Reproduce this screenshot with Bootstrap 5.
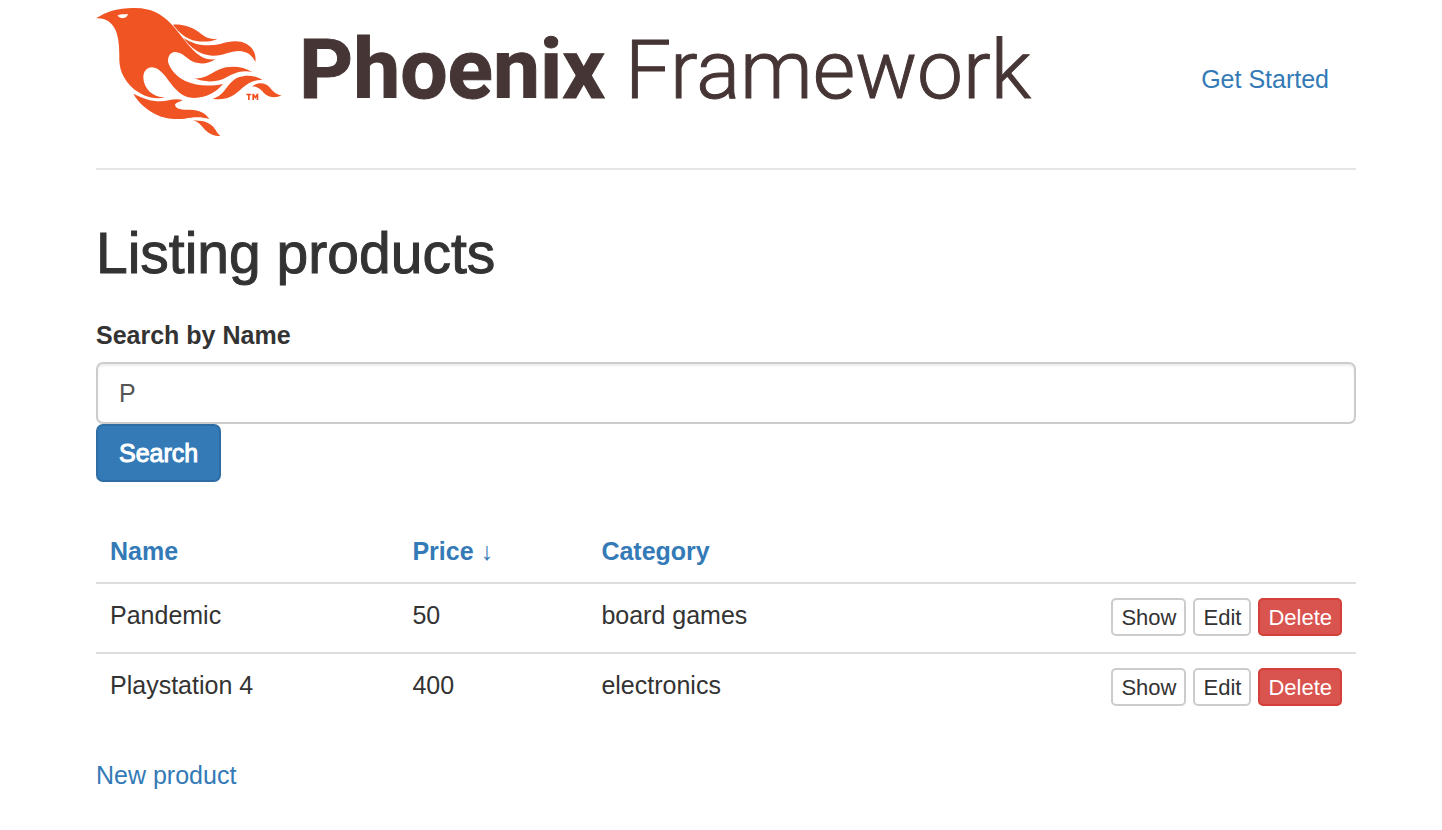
<!DOCTYPE html>
<html lang="en">
<head>
<meta charset="utf-8">
<meta name="viewport" content="width=device-width, initial-scale=1">
<title>Listing products</title>
<link href="https://cdn.jsdelivr.net/npm/bootstrap@5.3.0/dist/css/bootstrap.min.css" rel="stylesheet">
<style>
  body { font-family: "Liberation Sans", Arial, sans-serif; font-size: 25px; line-height: 34px; color: #333; background: #fff; }
  a { color: #337ab7; text-decoration: none; }
  a:hover { text-decoration: underline; }
  .page { padding: 8px 86px 24px 96px; }
  .site-header { border-bottom: 2px solid #e5e5e5; padding-bottom: 32px; }
  .brand, .brand:hover { color: #463535; text-decoration: none; font-family: Roboto, sans-serif; line-height: 120px; }
  .brand-first, .brand-second { padding-bottom: 4px; -webkit-text-stroke: 1px #463535; }
  .brand-first { font-size: 84px; font-weight: 700; margin-left: 17px; }
  .brand-second { font-size: 82px; font-weight: 300; margin-left: 20px; }
  .site-nav { padding: 14px 27px 0 0; }
  h2 { font-size: 57px; line-height: 64px; font-weight: 400; -webkit-text-stroke: 1px #333; margin: 51px 0 33px; }
  .form-label { font-weight: 700; margin-bottom: 10px; }
  .form-control, .form-control:focus { font-size: 25px; line-height: 34px; color: #555; padding: 12px 21px; border: 2px solid #ccc; border-radius: 7px; box-shadow: inset 0 2px 2px rgba(0,0,0,.075); }
  .btn-search { font-size: 25px; line-height: 34px; padding: 10px 21px; border: 2px solid #2e6da4; border-radius: 7px; color: #fff; background: #337ab7; -webkit-text-stroke: 1px #fff; }
  .products { color: #333; margin: 38px 0 36px; --bs-table-color: #333; }
  .products > :not(caption) > * > * { padding: 14px; border-bottom: 0; }
  .products > tbody > tr > * { border-top: 2px solid #ddd; }
  .products .col-name { width: 24%; }
  .products .col-price { width: 15%; }
  .actions { height: 40px; gap: 7px; }
  .btn-row { font-size: 22px; line-height: 32px; padding: 2px 8px 0; border: 2px solid #ccc; border-radius: 5px; color: #333; background: #fff; }
  .btn-row.btn-delete { color: #fff; background: #d9534f; border-color: #d43f3a; }
</style>
</head>
<body>
<div class="container-fluid page">
  <header class="site-header d-flex align-items-center justify-content-between">
    <a class="brand d-flex align-items-center" href="#">
      <svg width="186" height="128" viewBox="18 24 558 384" fill="#f05423" aria-hidden="true">
        <path fill-rule="evenodd" d="M18 55C50 34 85 24 128 24C178 23 211 38 243 71C275 105 297 145 332 169C346 178 361 179 376 178C359 190 335 194 313 187C290 178 280 157 255 156C240 157 234 169 234 185C240 207 259 230 286 243C322 260 362 259 399 252C380 276 351 292 312 294C276 293 255 267 236 242C222 223 207 203 186 202C170 203 160 214 160 233C162 265 185 291 225 292C190 302 150 284 128 264C103 239 90 216 88 182C88 153 88 125 80 99C71 71 50 53 18 55ZM83 46C93 41 103 44 114 42C112 51 104 56 94 54C88 53 85 50 83 46Z"/>
        <path d="M249 74C274 72 301 79 323 94C342 109 357 121 383 116C366 126 340 126 319 123C288 117 268 98 249 74Z"/>
        <path d="M280 113C316 137 353 140 391 132C420 124 445 119 470 132C491 144 499 164 496 186C488 166 470 154 447 153C420 153 400 168 367 167C328 164 301 142 280 113Z"/>
        <path d="M313 235C353 238 370 210 408 202C436 197 464 202 486 216C451 209 430 222 401 236C373 248 338 246 313 235Z"/>
        <path d="M368 296C407 287 408 248 446 232C469 223 496 226 517 240C482 238 466 257 443 276C421 295 397 301 368 296Z"/>
        <path d="M486 259C503 247 524 246 538 261C549 273 557 284 575 286C559 294 541 294 525 282C513 269 505 259 486 259Z"/>
        <path d="M130 281C156 294 182 304 211 304C236 304 250 293 278 300C269 306 258 307 255 314C256 328 278 329 300 329C328 331 346 338 358 357C331 349 308 352 284 356C245 359 215 354 188 338C161 322 142 303 130 281Z"/>
        <path d="M308 361C334 362 355 364 371 382C379 392 383 403 391 408C376 409 361 404 349 393C336 381 329 366 308 361Z"/>
        <path d="M469 281h15v5h-5v14h-5v-14h-5ZM487 281h5l4 7l4-7h5v19h-5v-9l-4 6l-4-6v9h-5Z"/>
      </svg>
      <span class="brand-first">Phoenix</span><span class="brand-second">Framework</span>
    </a>
    <nav class="site-nav"><a href="#">Get Started</a></nav>
  </header>

  <main>
    <h2>Listing products</h2>
    <form onsubmit="return false">
      <label class="form-label d-block" for="search-name">Search by Name</label>
      <input class="form-control" type="text" id="search-name" value="P">
      <button class="btn btn-search d-block" type="submit">Search</button>
    </form>

    <table class="table products">
      <thead>
        <tr>
          <th class="col-name" scope="col"><a href="#">Name</a></th>
          <th class="col-price" scope="col"><a href="#">Price ↓</a></th>
          <th scope="col"><a href="#">Category</a></th>
          <td></td>
        </tr>
      </thead>
      <tbody>
        <tr>
          <td>Pandemic</td><td>50</td><td>board games</td>
          <td><div class="actions d-flex justify-content-end align-items-start">
            <button class="btn btn-row" type="button">Show</button>
            <button class="btn btn-row" type="button">Edit</button>
            <button class="btn btn-row btn-delete" type="button">Delete</button>
          </div></td>
        </tr>
        <tr>
          <td>Playstation 4</td><td>400</td><td>electronics</td>
          <td><div class="actions d-flex justify-content-end align-items-start">
            <button class="btn btn-row" type="button">Show</button>
            <button class="btn btn-row" type="button">Edit</button>
            <button class="btn btn-row btn-delete" type="button">Delete</button>
          </div></td>
        </tr>
      </tbody>
    </table>
    <a href="#">New product</a>
  </main>
</div>
<script src="https://cdn.jsdelivr.net/npm/bootstrap@5.3.0/dist/js/bootstrap.bundle.min.js"></script>
</body>
</html></script>
